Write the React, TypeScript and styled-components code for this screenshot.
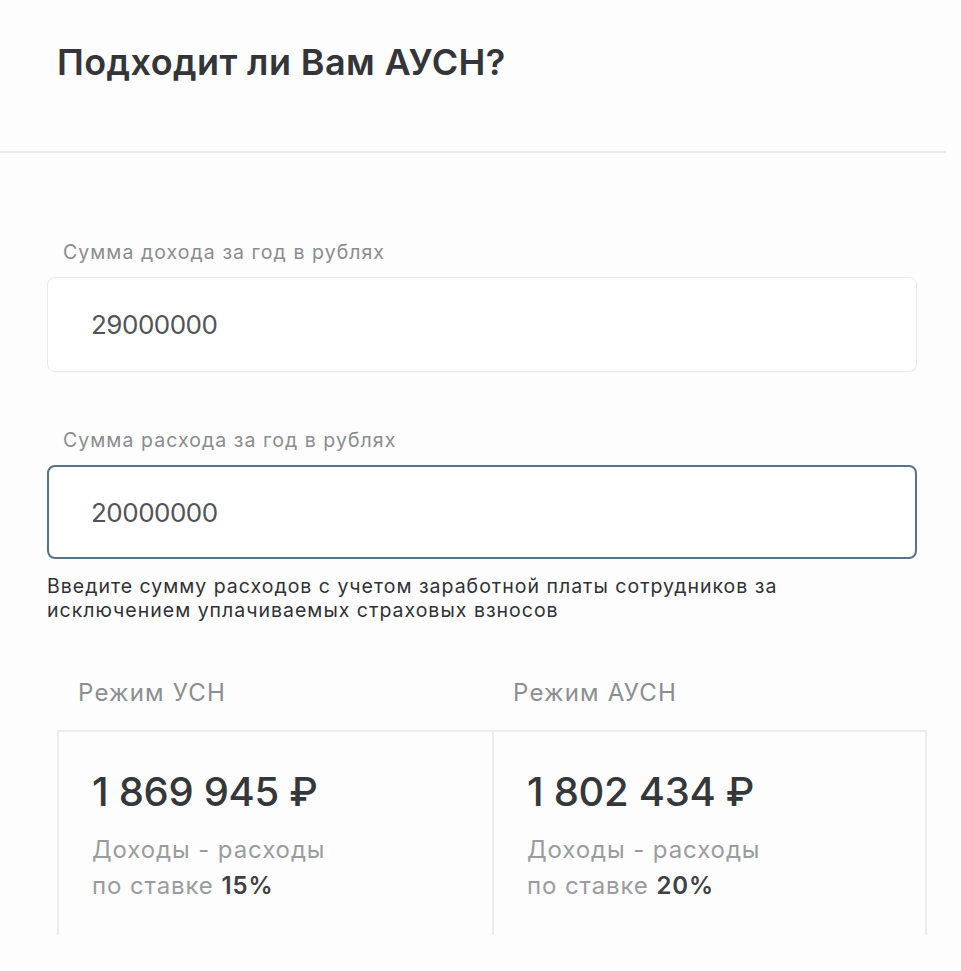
import React from "react";
import styled, { createGlobalStyle } from "styled-components";

const Global = createGlobalStyle`
  html, body { margin: 0; padding: 0; background: #fdfdfd; }
  body { font-family: Inter, "Noto Sans", "Liberation Sans", sans-serif; -webkit-font-smoothing: antialiased; }
  * { box-sizing: border-box; }
`;

const Page = styled.div`
  width: 961px;
  min-height: 971px;
  background: #fdfdfd;
`;

const Header = styled.header`
  width: 946px;
  height: 153px;
  padding: 40px 0 0 57px;
  border-bottom: 2px solid #e9e9ea;
`;

const Title = styled.h1`
  margin: 0;
  font-size: 36px;
  line-height: 44px;
  font-weight: 600;
  color: #333538;
  letter-spacing: 0.4px;
`;

const Form = styled.div`
  padding: 87px 0 0 47px;
  width: 917px;
  display: flex;
  flex-direction: column;
`;

const Field = styled.div<{ $gap?: number }>`
  display: flex;
  flex-direction: column;
  margin-top: ${(p) => p.$gap ?? 0}px;
`;

const Label = styled.label`
  padding-left: 16px;
  font-size: 19.5px;
  line-height: 24px;
  letter-spacing: 1.05px;
  color: #8a8c90;
  margin-bottom: 13px;
`;

const InputBox = styled.div<{ $focused?: boolean }>`
  height: ${(p) => (p.$focused ? 94 : 95)}px;
  border-radius: 8px;
  border: ${(p) => (p.$focused ? "2px solid #567385" : "1px solid #e8e9ea")};
  background: #fff;
  display: flex;
  align-items: center;
  padding-left: ${(p) => (p.$focused ? 42 : 43)}px;
  font-size: 26px;
  color: #525457;
  letter-spacing: -0.5px;
`;

const Hint = styled.p`
  margin: 15px 0 0 0;
  font-size: 19.5px;
  line-height: 24px;
  letter-spacing: 1px;
  color: #2f3134;
  width: 790px;
`;

const Results = styled.div`
  margin: 56px 0 0 57px;
  width: 870px;
  display: grid;
  grid-template-columns: 435px 435px;
`;

const ModeTitle = styled.div`
  padding-left: 21px;
  font-size: 24px;
  line-height: 30px;
  letter-spacing: 1.2px;
  color: #8b8e93;
  height: 52px;
`;

const Card = styled.div<{ $last?: boolean }>`
  height: 205px;
  border-top: 2px solid #ececee;
  border-left: 2px solid #ececee;
  ${(p) => (p.$last ? "border-right: 2px solid #ececee;" : "")}
  padding: 36px 0 0 33px;
`;

const Amount = styled.div`
  font-size: 40px;
  line-height: 48px;
  font-weight: 500;
  color: #35373a;
  letter-spacing: -0.3px;
`;

const Desc = styled.div`
  margin-top: 16px;
  font-size: 24px;
  line-height: 36px;
  letter-spacing: 0.9px;
  color: #9a9ca0;
`;

const Rate = styled.b`
  font-weight: 600;
  color: #3f4144;
`;

const Column = styled.div``;

const modes = [
  { title: "Режим УСН", amount: "1 869 945 ₽", rate: "15%" },
  { title: "Режим АУСН", amount: "1 802 434 ₽", rate: "20%" },
];

export default function App() {
  return (
    <Page>
      <Global />
      <Header>
        <Title>Подходит ли Вам АУСН?</Title>
      </Header>
      <Form>
        <Field>
          <Label>Сумма дохода за год в рублях</Label>
          <InputBox>29000000</InputBox>
        </Field>
        <Field $gap={56}>
          <Label>Сумма расхода за год в рублях</Label>
          <InputBox $focused>20000000</InputBox>
        </Field>
        <Hint>
          Введите сумму расходов с учетом заработной платы сотрудников за исключением уплачиваемых страховых взносов
        </Hint>
      </Form>
      <Results>
        {modes.map((m, i) => (
          <Column key={m.title}>
            <ModeTitle>{m.title}</ModeTitle>
            <Card $last={i === modes.length - 1}>
              <Amount>{m.amount}</Amount>
              <Desc>
                Доходы - расходы
                <br />
                по ставке <Rate>{m.rate}</Rate>
              </Desc>
            </Card>
          </Column>
        ))}
      </Results>
    </Page>
  );
}
